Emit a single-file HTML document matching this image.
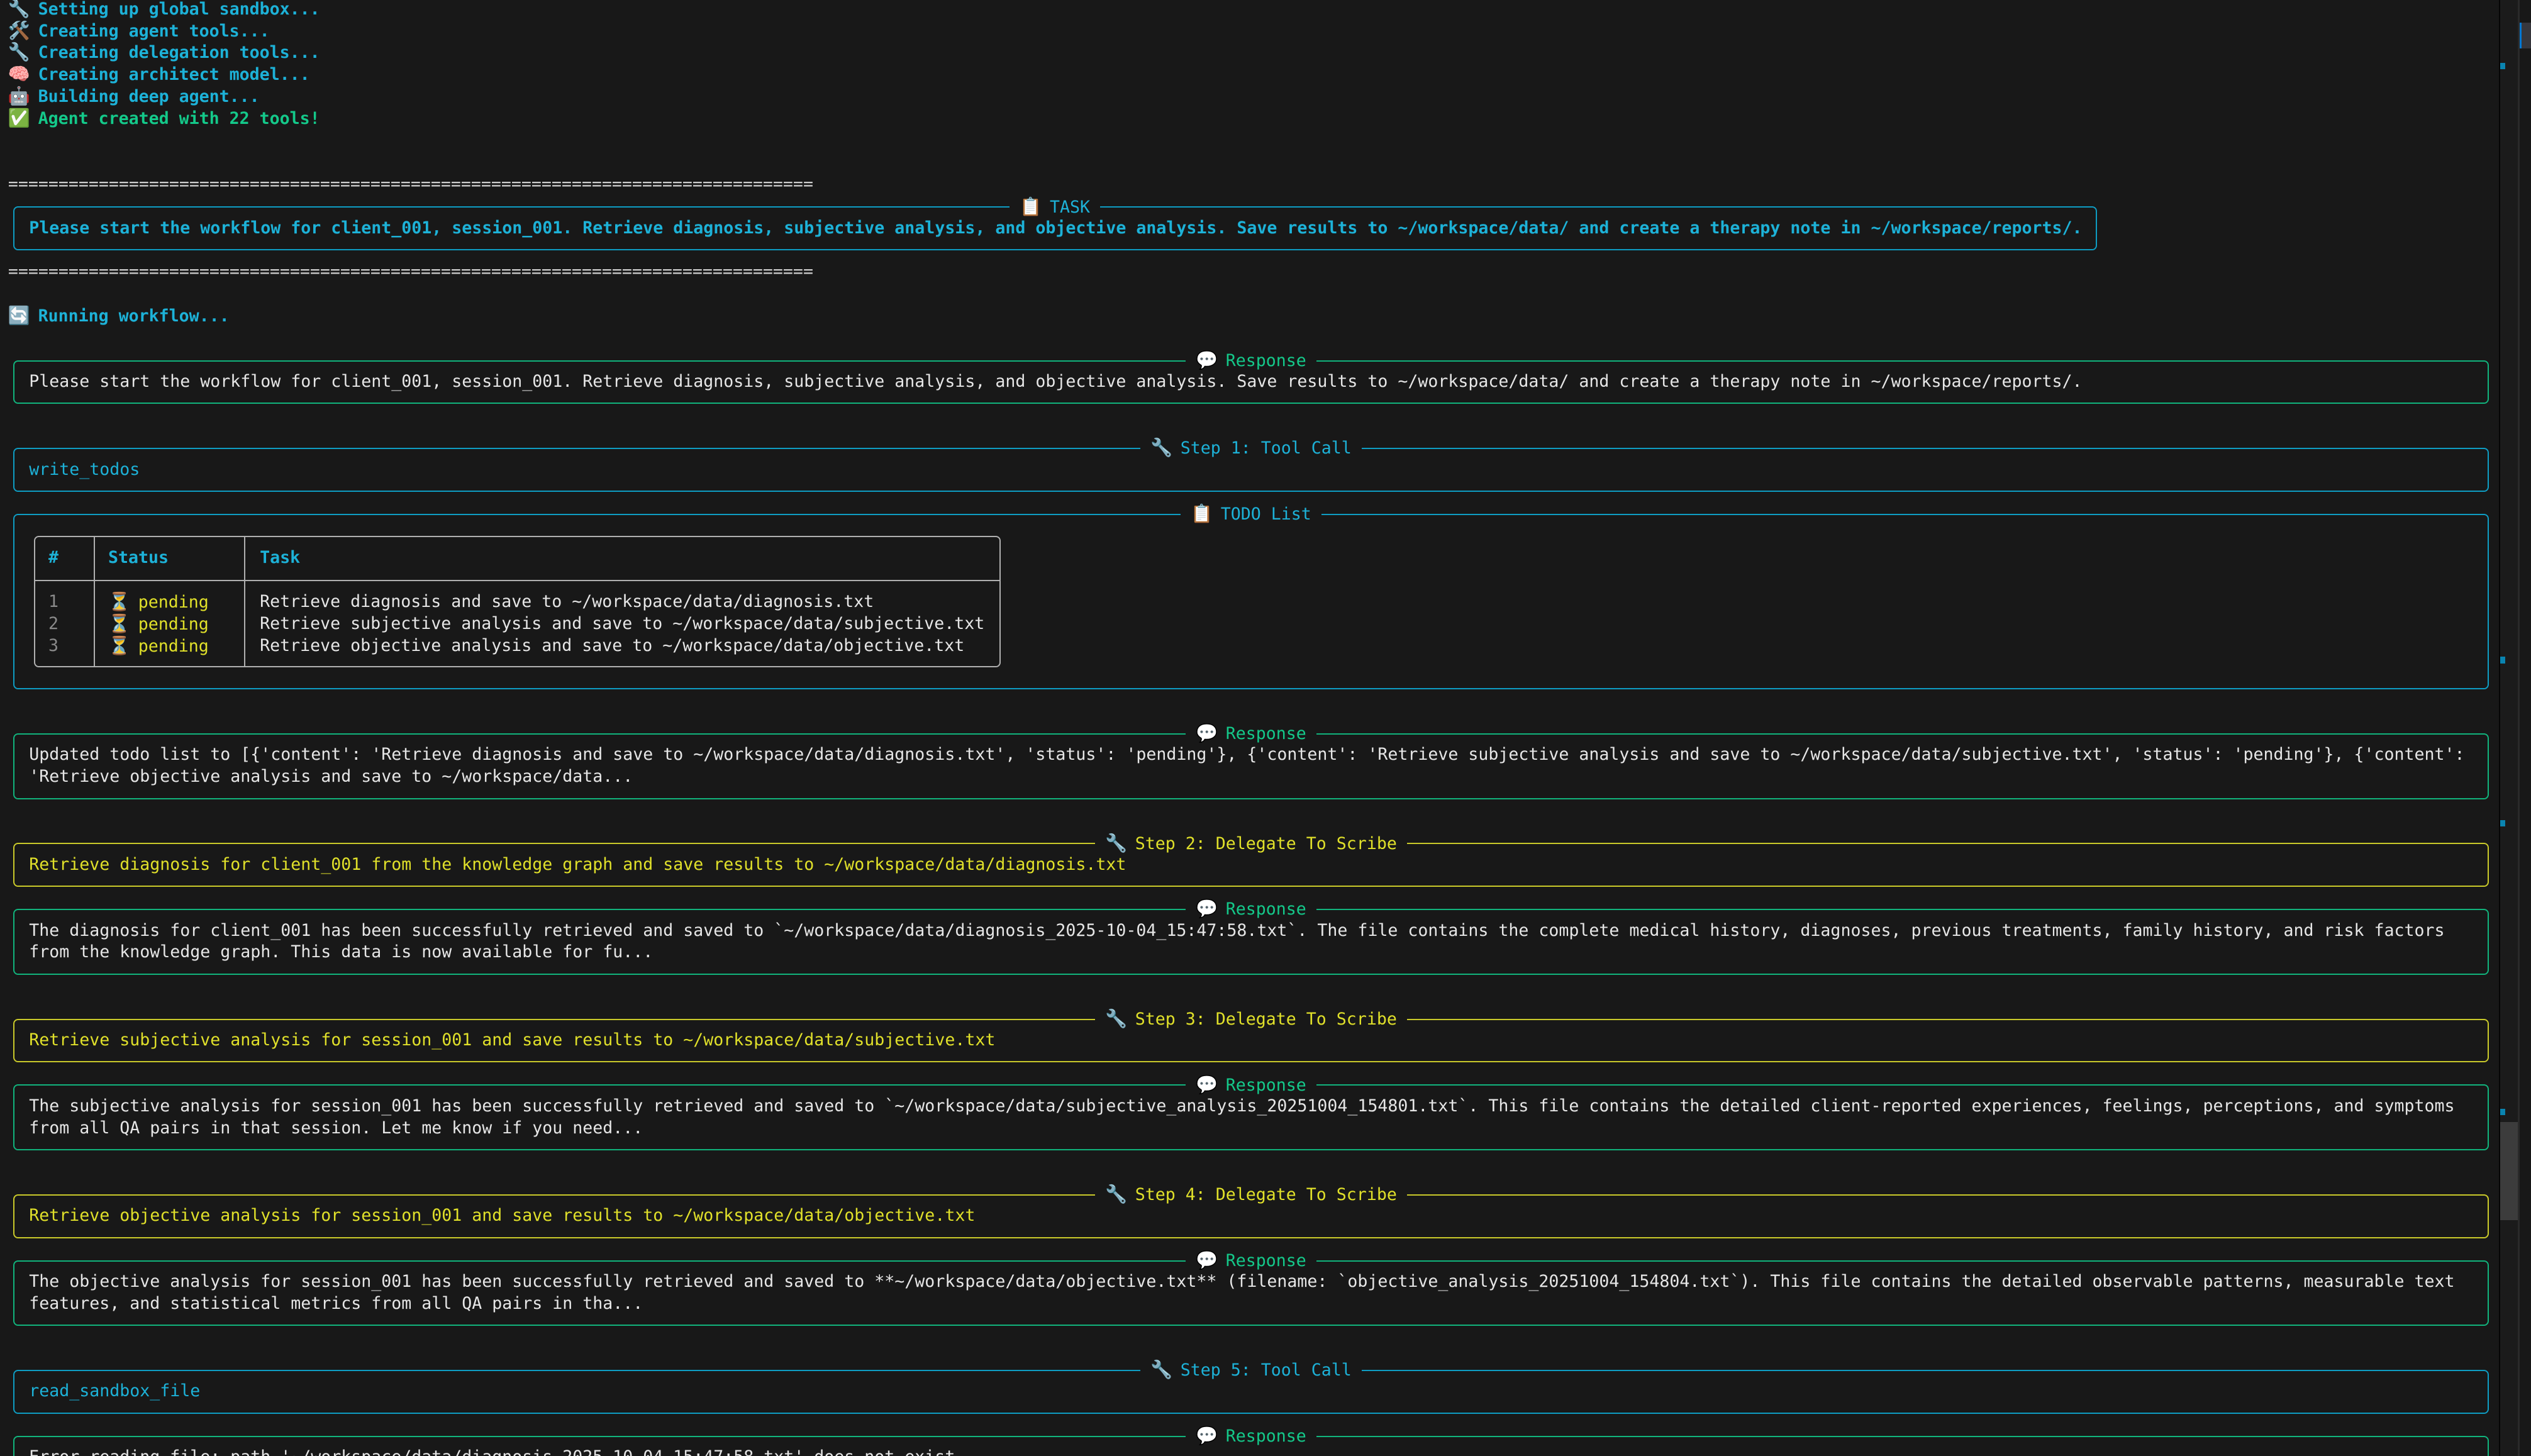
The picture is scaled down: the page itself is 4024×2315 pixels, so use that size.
<!DOCTYPE html>
<html><head><meta charset="utf-8">
<style>
html,body{margin:0;padding:0;background:#181818;overflow:hidden;width:4024px;height:2315px}
#w{position:relative;width:1568px;height:902px;zoom:2.56633;font-family:"DejaVu Sans Mono","Liberation Mono",monospace;font-size:10.36px;color:#e6e6e6;overflow:hidden}
#w > .r,#w > .p{margin-top:1px}
.r{position:absolute;height:13.6px;line-height:13.6px;white-space:pre}
.c{color:#1db2d8}.b{font-weight:bold}.g{color:#14c98a}.y{color:#e0e02a}.gr{color:#8a8a8a}.eq{color:#cfcfcf}
.e{display:inline-block;width:12.4px;text-align:center;font-family:"Noto Color Emoji","DejaVu Sans",sans-serif;font-size:11px;line-height:13.6px}
.p{position:absolute;box-sizing:border-box;border:1px solid;border-radius:3px}
.pc{border-color:#0e9cc2}.pg{border-color:#11b37c}.py{border-color:#c9c92a}
.t{position:absolute;left:0;right:0;text-align:center;line-height:13.6px;height:13.6px;white-space:pre}
.t span.h{background:#181818}
</style></head><body><div id="w">
<div class="r c b" style="top:-2.3px;left:5px"><span class="e">🔧</span> Setting up global sandbox...</div>
<div class="r c b" style="top:11.3px;left:5px"><span class="e">🛠</span> Creating agent tools...</div>
<div class="r c b" style="top:24.9px;left:5px"><span class="e">🔧</span> Creating delegation tools...</div>
<div class="r c b" style="top:38.5px;left:5px"><span class="e">🧠</span> Creating architect model...</div>
<div class="r c b" style="top:52.1px;left:5px"><span class="e">🤖</span> Building deep agent...</div>
<div class="r g b" style="top:65.7px;left:5px"><span class="e">✅</span> Agent created with 22 tools!</div>

<div class="r eq" style="top:106.5px;left:5px">================================================================================</div>
<div class="p pc" style="left:8px;width:1291px;top:126.9px;height:27.2px"><div class="t c" style="top:-7.3px"><span class="h"> <span class="e">📋</span> TASK </span></div></div>
<div class="r c b" style="top:133.7px;left:18px">Please start the workflow for client_001, session_001. Retrieve diagnosis, subjective analysis, and objective analysis. Save results to ~/workspace/data/ and create a therapy note in ~/workspace/reports/.</div>
<div class="r eq" style="top:160.9px;left:5px">================================================================================</div>
<div class="r c b" style="top:188.1px;left:5px"><span class="e">🔄</span> Running workflow...</div>

<div class="p pg" style="left:8px;width:1534px;top:222.1px;height:27.2px"><div class="t g" style="top:-7.3px"><span class="h"> <span class="e">💬</span> Response </span></div></div>
<div class="r" style="top:228.9px;left:18px">Please start the workflow for client_001, session_001. Retrieve diagnosis, subjective analysis, and objective analysis. Save results to ~/workspace/data/ and create a therapy note in ~/workspace/reports/.</div>

<div class="p pc" style="left:8px;width:1534px;top:276.5px;height:27.2px"><div class="t c" style="top:-7.3px"><span class="h"> <span class="e">🔧</span> Step 1: Tool Call </span></div></div>
<div class="r c" style="top:283.3px;left:18px">write_todos</div>

<div class="p pc" style="left:8px;width:1534px;top:317.3px;height:108.8px"><div class="t c" style="top:-7.3px"><span class="h"> <span class="e">📋</span> TODO List </span></div></div>
<div class="p" style="border-color:#b0b0b0;left:21px;width:599px;top:330.9px;height:81.6px"></div>
<div class="p" style="border:0;border-top:1px solid #b0b0b0;border-radius:0;left:21px;width:599px;top:358.1px;height:1px"></div>
<div class="p" style="border:0;border-left:1px solid #b0b0b0;border-radius:0;left:58px;top:331px;height:81px;width:1px"></div>
<div class="p" style="border:0;border-left:1px solid #b0b0b0;border-radius:0;left:151px;top:331px;height:81px;width:1px"></div>
<div class="r c b" style="top:338.1px;left:30px">#</div>
<div class="r c b" style="top:338.1px;left:67px">Status</div>
<div class="r c b" style="top:338.1px;left:161px">Task</div>
<div class="r gr" style="top:365.3px;left:30px">1</div>
<div class="r gr" style="top:378.9px;left:30px">2</div>
<div class="r gr" style="top:392.5px;left:30px">3</div>
<div class="r y" style="top:365.3px;left:67px"><span class="e">⏳</span> pending</div>
<div class="r y" style="top:378.9px;left:67px"><span class="e">⏳</span> pending</div>
<div class="r y" style="top:392.5px;left:67px"><span class="e">⏳</span> pending</div>
<div class="r" style="top:365.3px;left:161px">Retrieve diagnosis and save to ~/workspace/data/diagnosis.txt</div>
<div class="r" style="top:378.9px;left:161px">Retrieve subjective analysis and save to ~/workspace/data/subjective.txt</div>
<div class="r" style="top:392.5px;left:161px">Retrieve objective analysis and save to ~/workspace/data/objective.txt</div>

<div class="p pg" style="left:8px;width:1534px;top:453.3px;height:40.8px"><div class="t g" style="top:-7.3px"><span class="h"> <span class="e">💬</span> Response </span></div></div>
<div class="r" style="top:460.1px;left:18px">Updated todo list to [{'content': 'Retrieve diagnosis and save to ~/workspace/data/diagnosis.txt', 'status': 'pending'}, {'content': 'Retrieve subjective analysis and save to ~/workspace/data/subjective.txt', 'status': 'pending'}, {'content':</div>
<div class="r" style="top:473.7px;left:18px">'Retrieve objective analysis and save to ~/workspace/data...</div>

<div class="p py" style="left:8px;width:1534px;top:521.3px;height:27.2px"><div class="t y" style="top:-7.3px"><span class="h"> <span class="e">🔧</span> Step 2: Delegate To Scribe </span></div></div>
<div class="r y" style="top:528.1px;left:18px">Retrieve diagnosis for client_001 from the knowledge graph and save results to ~/workspace/data/diagnosis.txt</div>
<div class="p pg" style="left:8px;width:1534px;top:562.1px;height:40.8px"><div class="t g" style="top:-7.3px"><span class="h"> <span class="e">💬</span> Response </span></div></div>
<div class="r" style="top:568.9px;left:18px">The diagnosis for client_001 has been successfully retrieved and saved to `~/workspace/data/diagnosis_2025-10-04_15:47:58.txt`. The file contains the complete medical history, diagnoses, previous treatments, family history, and risk factors</div>
<div class="r" style="top:582.5px;left:18px">from the knowledge graph. This data is now available for fu...</div>

<div class="p py" style="left:8px;width:1534px;top:630.1px;height:27.2px"><div class="t y" style="top:-7.3px"><span class="h"> <span class="e">🔧</span> Step 3: Delegate To Scribe </span></div></div>
<div class="r y" style="top:636.9px;left:18px">Retrieve subjective analysis for session_001 and save results to ~/workspace/data/subjective.txt</div>
<div class="p pg" style="left:8px;width:1534px;top:670.9px;height:40.8px"><div class="t g" style="top:-7.3px"><span class="h"> <span class="e">💬</span> Response </span></div></div>
<div class="r" style="top:677.7px;left:18px">The subjective analysis for session_001 has been successfully retrieved and saved to `~/workspace/data/subjective_analysis_20251004_154801.txt`. This file contains the detailed client-reported experiences, feelings, perceptions, and symptoms</div>
<div class="r" style="top:691.3px;left:18px">from all QA pairs in that session. Let me know if you need...</div>

<div class="p py" style="left:8px;width:1534px;top:738.9px;height:27.2px"><div class="t y" style="top:-7.3px"><span class="h"> <span class="e">🔧</span> Step 4: Delegate To Scribe </span></div></div>
<div class="r y" style="top:745.7px;left:18px">Retrieve objective analysis for session_001 and save results to ~/workspace/data/objective.txt</div>
<div class="p pg" style="left:8px;width:1534px;top:779.7px;height:40.8px"><div class="t g" style="top:-7.3px"><span class="h"> <span class="e">💬</span> Response </span></div></div>
<div class="r" style="top:786.5px;left:18px">The objective analysis for session_001 has been successfully retrieved and saved to **~/workspace/data/objective.txt** (filename: `objective_analysis_20251004_154804.txt`). This file contains the detailed observable patterns, measurable text</div>
<div class="r" style="top:800.1px;left:18px">features, and statistical metrics from all QA pairs in tha...</div>

<div class="p pc" style="left:8px;width:1534px;top:847.7px;height:27.2px"><div class="t c" style="top:-7.3px"><span class="h"> <span class="e">🔧</span> Step 5: Tool Call </span></div></div>
<div class="r c" style="top:854.5px;left:18px">read_sandbox_file</div>
<div class="p pg" style="left:8px;width:1534px;top:888.5px;height:40.8px"><div class="t g" style="top:-7.3px"><span class="h"> <span class="e">💬</span> Response </span></div></div>
<div class="r" style="top:895.3px;left:18px">Error reading file: path '~/workspace/data/diagnosis_2025-10-04_15:47:58.txt' does not exist</div>

<div style="position:absolute;left:1548px;top:0;width:1px;height:902px;background:#050505"></div>
<div style="position:absolute;left:1549px;top:0;width:11px;height:902px;background:#1b1b1b"></div>
<div style="position:absolute;left:1560px;top:0;width:1px;height:902px;background:#2a2a2a"></div>
<div style="position:absolute;left:1549px;top:39px;width:3px;height:4px;background:#0a84b0"></div>
<div style="position:absolute;left:1549px;top:407px;width:3px;height:4px;background:#0a84b0"></div>
<div style="position:absolute;left:1549px;top:508px;width:3px;height:4px;background:#0a84b0"></div>
<div style="position:absolute;left:1549px;top:687px;width:3px;height:4px;background:#0a84b0"></div>
<div style="position:absolute;left:1549px;top:695px;width:11px;height:61px;background:#3c3c3c"></div>
<div style="position:absolute;left:1561px;top:14px;width:1px;height:16px;background:#0078d4"></div>
<div style="position:absolute;left:1562px;top:14px;width:6px;height:16px;background:#37373d"></div>
</div></body></html>
